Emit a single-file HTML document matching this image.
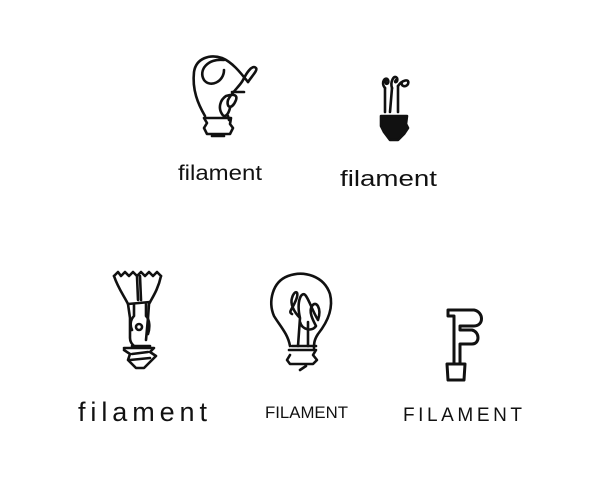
<!DOCTYPE html>
<html><head><style>html,body{margin:0;background:#fff}svg{display:block}</style></head><body>
<svg width="600" height="500" viewBox="0 0 600 500" xmlns="http://www.w3.org/2000/svg">
<rect width="600" height="500" fill="#fff"/>
<g fill="none" stroke="#111" stroke-width="2.6" stroke-linecap="round" stroke-linejoin="round">
<path d="M205 116 C198 104 192 90 194 72 C196 58 210 54 222 58 C232 62 240 72 248 82"/>
<path d="M224 60 C208 58 198 70 204 80 C210 88 224 82 224 70"/>
<path d="M248 82 C252 76 258 70 256 68 C252 64 246 74 243 80 C240 86 232 92 228 100 C226 108 232 110 236 100 C238 94 232 94 226 96 C220 100 218 108 222 114 C224 118 228 116 230 108"/>
<path d="M232 92 L244 92"/>
<path d="M228 116 L229 120"/>
<path d="M204 118 L231 118 L230 124 L233 128 L230 134 L207 134 L204 128 L207 123 Z"/>
<path d="M212 136 L224 136"/>
<path d="M385 112 L385 88 M398 112 L398 86 M390 112 L392 88"/>
<path d="M385 88 C380 82 386 76 388 80 C390 84 384 86 386 80 M392 88 C390 82 394 74 397 78 C399 82 393 84 396 80 M398 86 C402 80 410 78 408 84 C406 88 400 86 402 82"/>
<path d="M381 116 L407 116 L406 124 L408 128 L404 134 L398 140 L390 140 L384 132 L381 126 Z" fill="#111"/>
<path d="M114 276 L118 272 L121 276 L125 272 L129 276 L133 272 L137 276 L141 272 L145 276 L149 272 L153 276 L157 272 L161 276"/>
<path d="M114 276 C118 288 124 296 128 304 L130 318 L130 338 C130 342 132 344 134 346 M161 276 C158 290 152 298 149 304 L148 318 L146 340"/>
<path d="M137 276 L138 300 M140 276 L141 300"/>
<path d="M128 304 L150 302 M134 305 L134 316 C130 320 130 326 132 330 M146 304 L146 316 C150 320 150 328 148 334"/>
<circle cx="139" cy="327" r="3"/>
<path d="M132 346 L150 346 M124 348 L154 348 L150 352 L156 356 L150 362 L144 368 L136 368 L128 360 L130 354 L124 350 M132 354 L148 352 M130 360 L150 358"/>
<path d="M290 346 C288 334 280 326 274 316 C268 302 272 282 288 276 C304 270 324 276 330 294 C334 310 326 324 318 334 C314 340 314 344 314 348"/>
<path d="M292 346 L316 346 M289 350 L316 350 L313 355 L317 360 L313 364 L290 364 L287 360 L290 355 M306 366 L300 370"/>
<path d="M298 346 L300 318 M308 346 L308 322 M300 318 C294 312 290 304 292 298 C294 290 300 290 296 300 C292 310 288 312 292 314 M300 318 C296 300 302 290 306 296 C310 302 312 310 318 320 C322 308 316 300 312 306 C308 312 314 322 316 326 C312 332 302 330 300 322"/>
<path d="M448 310 L474 310 C484 312 484 326 474 326 L460 326 L460 330 L472 330 C480 332 480 344 472 344 L460 344 L460 364 L454 364 L454 316 L448 316 Z" stroke-width="3"/>
<path d="M447 364 L465 364 L464 380 L448 380 Z" stroke-width="3"/>
</g>
<g font-family="Liberation Sans, sans-serif" fill="#111">
<text x="178" y="180" font-size="21" textLength="84" lengthAdjust="spacingAndGlyphs">filament</text>
<text x="340" y="186" font-size="22" textLength="97" lengthAdjust="spacingAndGlyphs">filament</text>
<text x="78" y="421" font-size="27" textLength="129" lengthAdjust="spacing">filament</text>
<text x="265" y="418" font-size="17" textLength="83" lengthAdjust="spacingAndGlyphs">FILAMENT</text>
<text x="403" y="421" font-size="19" textLength="119" lengthAdjust="spacing">FILAMENT</text>
</g>
</svg>
</body></html>
